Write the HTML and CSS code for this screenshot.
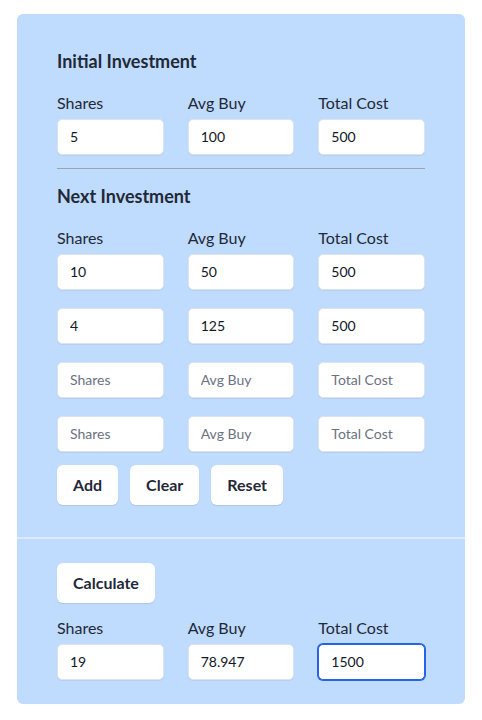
FILE: index.html
```html
<!DOCTYPE html>
<html lang="en">
<head>
<meta charset="utf-8">
<title>Average Calculator</title>
<link rel="stylesheet" href="styles.css">
</head>
<body>
<div class="card">
  <section class="top">
    <h2 class="heading">Initial Investment</h2>
    <div class="grid labels">
      <label>Shares</label><label>Avg Buy</label><label>Total Cost</label>
    </div>
    <div class="grid rows">
      <input class="field" value="5"><input class="field" value="100"><input class="field" value="500">
    </div>
    <hr class="divider">
    <h2 class="heading">Next Investment</h2>
    <div class="grid labels">
      <label>Shares</label><label>Avg Buy</label><label>Total Cost</label>
    </div>
    <div class="grid rows">
      <input class="field" value="10"><input class="field" value="50"><input class="field" value="500">
      <input class="field" value="4"><input class="field" value="125"><input class="field" value="500">
      <input class="field" placeholder="Shares"><input class="field" placeholder="Avg Buy"><input class="field" placeholder="Total Cost">
      <input class="field" placeholder="Shares"><input class="field" placeholder="Avg Buy"><input class="field" placeholder="Total Cost">
    </div>
    <div class="actions">
      <button class="btn">Add</button><button class="btn">Clear</button><button class="btn">Reset</button>
    </div>
  </section>
  <section class="bottom">
    <div class="actions first">
      <button class="btn">Calculate</button>
    </div>
    <div class="grid labels">
      <label>Shares</label><label>Avg Buy</label><label>Total Cost</label>
    </div>
    <div class="grid rows">
      <input class="field" value="19"><input class="field" value="78.947"><input class="field focused" value="1500">
    </div>
  </section>
</div>
</body>
</html>
```
FILE: styles.css
```css
* { box-sizing: border-box; }
body {
  margin: 0;
  background: #ffffff;
  font-family: Lato, "Noto Sans", sans-serif;
  color: #1f2937;
}
.card {
  margin: 14px 17px;
  width: 448px;
  background: #bfdbfe;
  border-radius: 6px;
}
.top {
  padding: 33px 40px 32px;
}
.bottom {
  border-top: 2px solid #dbeafe;
  padding: 24px 40px 24px;
}
.heading {
  margin: 0 0 16px;
  font-size: 18px;
  line-height: 28px;
  font-weight: 700;
  color: #1f2937;
}
.grid {
  display: grid;
  grid-template-columns: repeat(3, 1fr);
  column-gap: 24px;
}
.labels {
  margin-bottom: 4px;
}
.labels label {
  font-size: 16px;
  line-height: 24px;
  color: #1f2937;
}
.rows {
  row-gap: 18px;
}
.field {
  width: 100%;
  height: 36px;
  border: 1px solid #dde3ea;
  border-radius: 5px;
  background: #ffffff;
  padding: 0 12px 2px;
  font-family: inherit;
  font-size: 14px;
  color: #111827;
  box-shadow: 0 1px 1px rgba(0,0,0,0.06);
  outline: none;
}
.field::placeholder { color: #6b7280; }
.field.focused {
  border-color: #2563eb;
  box-shadow: 0 0 0 1px #2563eb;
}
.divider {
  margin: 13px 0 13px;
  border: 0;
  border-top: 1px solid #9ca3af;
}
.actions {
  display: flex;
  gap: 12px;
  margin-top: 13px;
}
.actions.first {
  margin-top: 0;
  margin-bottom: 13px;
}
.btn {
  height: 40px;
  padding: 0 16px 2px;
  border: 0;
  border-radius: 6px;
  background: #ffffff;
  font-family: inherit;
  font-size: 16px;
  font-weight: 700;
  color: #1f2937;
  box-shadow: 0 1px 1px rgba(0,0,0,0.1);
}
```
